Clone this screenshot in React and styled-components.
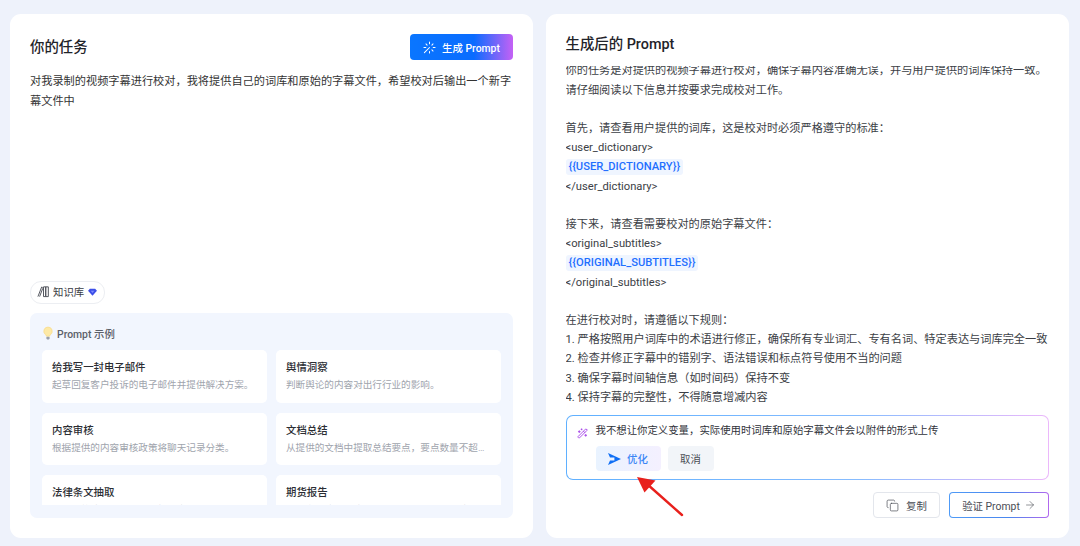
import React from 'react';
import styled, { createGlobalStyle } from 'styled-components';
import { Copy, ArrowRight, WandSparkles } from 'lucide-react';

const fontStack = 'Roboto, "Noto Sans CJK SC", sans-serif';

const GlobalStyle = createGlobalStyle`
  html, body { margin: 0; padding: 0; background: #eef2fb; }
  * { box-sizing: border-box; }
  body { font-family: Roboto, "Noto Sans CJK SC", sans-serif; color: #333; }
`;

const Page = styled.div`
  position: relative;
  width: 1080px;
  height: 546px;
  overflow: hidden;
  display: grid;
  grid-template-columns: 523px 523.5px;
  column-gap: 12.5px;
  padding: 14px 10px 8px 10px;
`;

const Card = styled.section`
  background: #fff;
  border-radius: 11px;
  padding: 20px;
  display: flex;
  flex-direction: column;
  min-height: 0;
  overflow: hidden;
`;

const CardHead = styled.header`
  display: flex;
  justify-content: space-between;
  align-items: center;
  height: ${(p) => (p.$compact ? '20px' : '26px')};
  flex: none;
`;

const Title = styled.h2`
  margin: 0 0 3px;
  font-size: 14.4px;
  font-weight: 500;
  color: #1f2329;
`;

const GenerateButton = styled.button`
  width: 103px;
  height: 26px;
  border: 0;
  border-radius: 4px;
  background: linear-gradient(90deg, #0a76ff 0%, #0a6cff 62%, #c561f5 100%);
  color: #fff;
  font: 500 10.4px ${fontStack};
  display: flex;
  align-items: center;
  justify-content: center;
  gap: 6px;
  padding: 0;
`;

const TaskText = styled.p`
  margin: 12px 0 0;
  font-size: 11.2px;
  line-height: 20px;
  color: #333;
`;

const Spacer = styled.div`
  flex: 1;
`;

const KnowledgeChip = styled.button`
  align-self: flex-start;
  width: 75px;
  height: 23px;
  border: 1px solid #eceef2;
  border-radius: 11px;
  background: #fff;
  display: flex;
  align-items: center;
  gap: 3px;
  padding: 0 0 2px 6px;
  font: 400 10.4px ${fontStack};
  color: #3a3d45;
  margin-bottom: 9px;
`;

const ExamplePanel = styled.div`
  flex: none;
  height: 205px;
  background: #f2f6fe;
  border-radius: 7px;
  padding: 11px 12px 13px;
  display: flex;
  flex-direction: column;
`;

const ExampleHead = styled.div`
  display: flex;
  align-items: center;
  gap: 3px;
  height: 18px;
  font-size: 10.4px;
  font-weight: 500;
  color: #5c6069;
  margin-bottom: 8px;
  flex: none;
`;

const ExampleClip = styled.div`
  flex: 1;
  min-height: 0;
  overflow: hidden;
`;

const ExampleGrid = styled.div`
  display: grid;
  grid-template-columns: 224.5px 224.5px;
  column-gap: 9.5px;
  row-gap: 10px;
`;

const ExampleCard = styled.article`
  height: 52.5px;
  background: #fff;
  border-radius: 5px;
  padding: 9px 10px;
`;

const ExampleTitle = styled.div`
  font-size: 10.4px;
  line-height: 17px;
  font-weight: 500;
  color: #2b2d33;
`;

const ExampleDesc = styled.div`
  font-size: 9.6px;
  line-height: 17px;
  color: #a0a4ad;
  white-space: nowrap;
  overflow: hidden;
  text-overflow: ellipsis;
`;

const PromptScroll = styled.div`
  flex: 1;
  min-height: 0;
  overflow: hidden;
  display: flex;
  flex-direction: column;
  justify-content: flex-end;
  margin-top: 12px;
`;

const Line = styled.div`
  font-size: 11.2px;
  line-height: 19.2px;
  min-height: 19.2px;
  color: #3b3e45;
  flex: none;
  white-space: nowrap;
`;

const Variable = styled.span`
  display: inline-block;
  background: #eff5ff;
  color: #1f6fff;
  font-weight: 500;
  line-height: 16px;
  padding: 0 3px;
  border-radius: 3px;
`;

const RefineBox = styled.div`
  flex: none;
  height: 65px;
  margin-top: 8px;
  border: 1px solid transparent;
  border-radius: 7px;
  background: linear-gradient(#fff, #fff) padding-box,
    linear-gradient(90deg, #5fb0ff 0%, #86bcff 60%, #ecb8fb 100%) border-box;
  padding: 8px 10px;
  display: grid;
  grid-template-columns: 19px 1fr;
`;

const RefineText = styled.div`
  font-size: 10.4px;
  line-height: 14px;
  color: #2f3239;
`;

const RefineIcon = styled.div`
  display: flex;
  align-items: flex-start;
  padding-top: 4px;
  color: #a647e8;
`;

const RefineActions = styled.div`
  display: flex;
  gap: 7px;
  margin-top: 8px;
`;

const OptimizeButton = styled.button`
  width: 65px;
  height: 25px;
  border: 0;
  border-radius: 4px;
  background: linear-gradient(90deg, #e9f3ff, #f4f0ff);
  color: #3b86f6;
  font: 500 10.4px ${fontStack};
  display: flex;
  align-items: center;
  justify-content: center;
  gap: 6px;
  padding: 0;
`;

const CancelButton = styled.button`
  width: 46px;
  height: 25px;
  border: 0;
  border-radius: 4px;
  background: #f2f5f9;
  color: #4a4d55;
  font: 400 10.4px ${fontStack};
  padding: 0;
`;

const Footer = styled.footer`
  flex: none;
  display: flex;
  justify-content: flex-end;
  gap: 9px;
  margin-top: 12px;
`;

const CopyButton = styled.button`
  width: 67px;
  height: 26px;
  border: 1px solid #e3e6ec;
  border-radius: 4px;
  background: #fff;
  color: #4a4d55;
  font: 400 10.4px ${fontStack};
  display: flex;
  align-items: center;
  justify-content: center;
  gap: 7px;
  padding: 0;
`;

const VerifyButton = styled.button`
  width: 100px;
  height: 26px;
  border: 1px solid transparent;
  border-radius: 4px;
  background: linear-gradient(#fff, #fff) padding-box,
    linear-gradient(90deg, #4f9bf7 0%, #4a86ee 60%, #b268ee 100%) border-box;
  color: #4a4d55;
  font: 400 10.4px ${fontStack};
  display: flex;
  align-items: center;
  justify-content: center;
  gap: 4px;
  padding: 0;
`;

const Annotation = styled.svg`
  position: absolute;
  left: 630px;
  top: 470px;
`;

const SparkIcon = () => (
  <svg width="13" height="13" viewBox="0 0 14 14" fill="none" stroke="#fff" strokeWidth="1.1" strokeLinecap="round">
    <path d="M1.5 12.5 7 7" />
    <path d="M7 1v2M10.8 3.2 9.6 4.4M13 7h-2M10.8 10.8 9.6 9.6M7 13v-1.6M1 7h2M3.2 3.2l1.2 1.2" />
  </svg>
);

const BooksIcon = () => (
  <svg width="13" height="13" viewBox="0 0 14 14" fill="none" stroke="#4a4d55" strokeWidth="1" strokeLinejoin="round">
    <path d="M1 12.5 5 2.2l1.2.5" />
    <path d="M2.8 12.5 6.2 3.6" />
    <rect x="7" y="2" width="2.4" height="10.5" />
    <rect x="9.4" y="2" width="2.8" height="10.5" />
  </svg>
);

const DiamondIcon = () => (
  <svg width="9" height="8" viewBox="0 0 10 9" style={{ marginLeft: 1 }}>
    <path d="M2 .8h6L10 3 5 8.6 0 3z" fill="#3d4fe8" />
    <path d="M3 3h4L5 5.6z" fill="#7c8cff" />
  </svg>
);

const BulbIcon = () => (
  <svg width="12" height="15" viewBox="0 0 12 15">
    <path d="M6 1a4.2 4.2 0 0 0-2.6 7.5c.5.5.8 1 .9 1.7h3.4c.1-.7.4-1.2.9-1.7A4.2 4.2 0 0 0 6 1z" fill="#fde9a6" stroke="#f8d77c" strokeWidth=".6" />
    <rect x="4.4" y="10.8" width="3.2" height="2.6" rx=".8" fill="#9aa0ab" />
  </svg>
);

const SendIcon = () => (
  <svg width="13" height="12" viewBox="0 0 13 12">
    <path d="M0 0l13 6L0 12l2-4.6h4.4V4.6H2z" fill="#0f6ff5" />
  </svg>
);

const examples = [
  { title: '给我写一封电子邮件', desc: '起草回复客户投诉的电子邮件并提供解决方案。' },
  { title: '舆情洞察', desc: '判断舆论的内容对出行行业的影响。' },
  { title: '内容审核', desc: '根据提供的内容审核政策将聊天记录分类。' },
  { title: '文档总结', desc: '从提供的文档中提取总结要点，要点数量不超过五个并按重要程度排序。' },
  { title: '法律条文抽取', desc: '从文档的法律条文中抽取相关内容并列出。' },
  { title: '期货报告', desc: '根据交易情况生成期货报告，并给出分析建议。' },
];

const promptLines = [
  '你的任务是对提供的视频字幕进行校对，确保字幕内容准确无误，并与用户提供的词库保持一致。',
  '请仔细阅读以下信息并按要求完成校对工作。',
  '',
  '首先，请查看用户提供的词库，这是校对时必须严格遵守的标准：',
  '<user_dictionary>',
  { variable: '{{USER_DICTIONARY}}' },
  '</user_dictionary>',
  '',
  '接下来，请查看需要校对的原始字幕文件：',
  '<original_subtitles>',
  { variable: '{{ORIGINAL_SUBTITLES}}' },
  '</original_subtitles>',
  '',
  '在进行校对时，请遵循以下规则：',
  '1. 严格按照用户词库中的术语进行修正，确保所有专业词汇、专有名词、特定表达与词库完全一致',
  '2. 检查并修正字幕中的错别字、语法错误和标点符号使用不当的问题',
  '3. 确保字幕时间轴信息（如时间码）保持不变',
  '4. 保持字幕的完整性，不得随意增减内容',
];

export default function App() {
  return (
    <Page>
      <GlobalStyle />
      <Card>
        <CardHead>
          <Title>你的任务</Title>
          <GenerateButton>
            <SparkIcon />
            生成 Prompt
          </GenerateButton>
        </CardHead>
        <TaskText>
          对我录制的视频字幕进行校对，我将提供自己的词库和原始的字幕文件，希望校对后输出一个新字幕文件中
        </TaskText>
        <Spacer />
        <KnowledgeChip>
          <BooksIcon />
          知识库
          <DiamondIcon />
        </KnowledgeChip>
        <ExamplePanel>
          <ExampleHead>
            <BulbIcon />
            Prompt 示例
          </ExampleHead>
          <ExampleClip>
            <ExampleGrid>
              {examples.map((item) => (
                <ExampleCard key={item.title}>
                  <ExampleTitle>{item.title}</ExampleTitle>
                  <ExampleDesc>{item.desc}</ExampleDesc>
                </ExampleCard>
              ))}
            </ExampleGrid>
          </ExampleClip>
        </ExamplePanel>
      </Card>

      <Card>
        <CardHead $compact>
          <Title>生成后的 Prompt</Title>
        </CardHead>
        <PromptScroll>
          {promptLines.map((line, i) => (
            <Line key={i}>
              {typeof line === 'string' ? line : <Variable>{line.variable}</Variable>}
            </Line>
          ))}
        </PromptScroll>
        <RefineBox>
          <RefineIcon>
            <WandSparkles size={11} strokeWidth={2} />
          </RefineIcon>
          <div>
            <RefineText>我不想让你定义变量，实际使用时词库和原始字幕文件会以附件的形式上传</RefineText>
            <RefineActions>
              <OptimizeButton>
                <SendIcon />
                优化
              </OptimizeButton>
              <CancelButton>取消</CancelButton>
            </RefineActions>
          </div>
        </RefineBox>
        <Footer>
          <CopyButton>
            <Copy size={13} strokeWidth={1.3} />
            复制
          </CopyButton>
          <VerifyButton>
            验证 Prompt
            <ArrowRight size={12} strokeWidth={1.2} />
          </VerifyButton>
        </Footer>
      </Card>

      <Annotation width="60" height="50" viewBox="0 0 60 50">
        <path d="M52 45 17 14" stroke="#e8201c" strokeWidth="2.4" strokeLinecap="round" />
        <path d="M7 7l18.5 3.5-11 12z" fill="#e8201c" />
      </Annotation>
    </Page>
  );
}
